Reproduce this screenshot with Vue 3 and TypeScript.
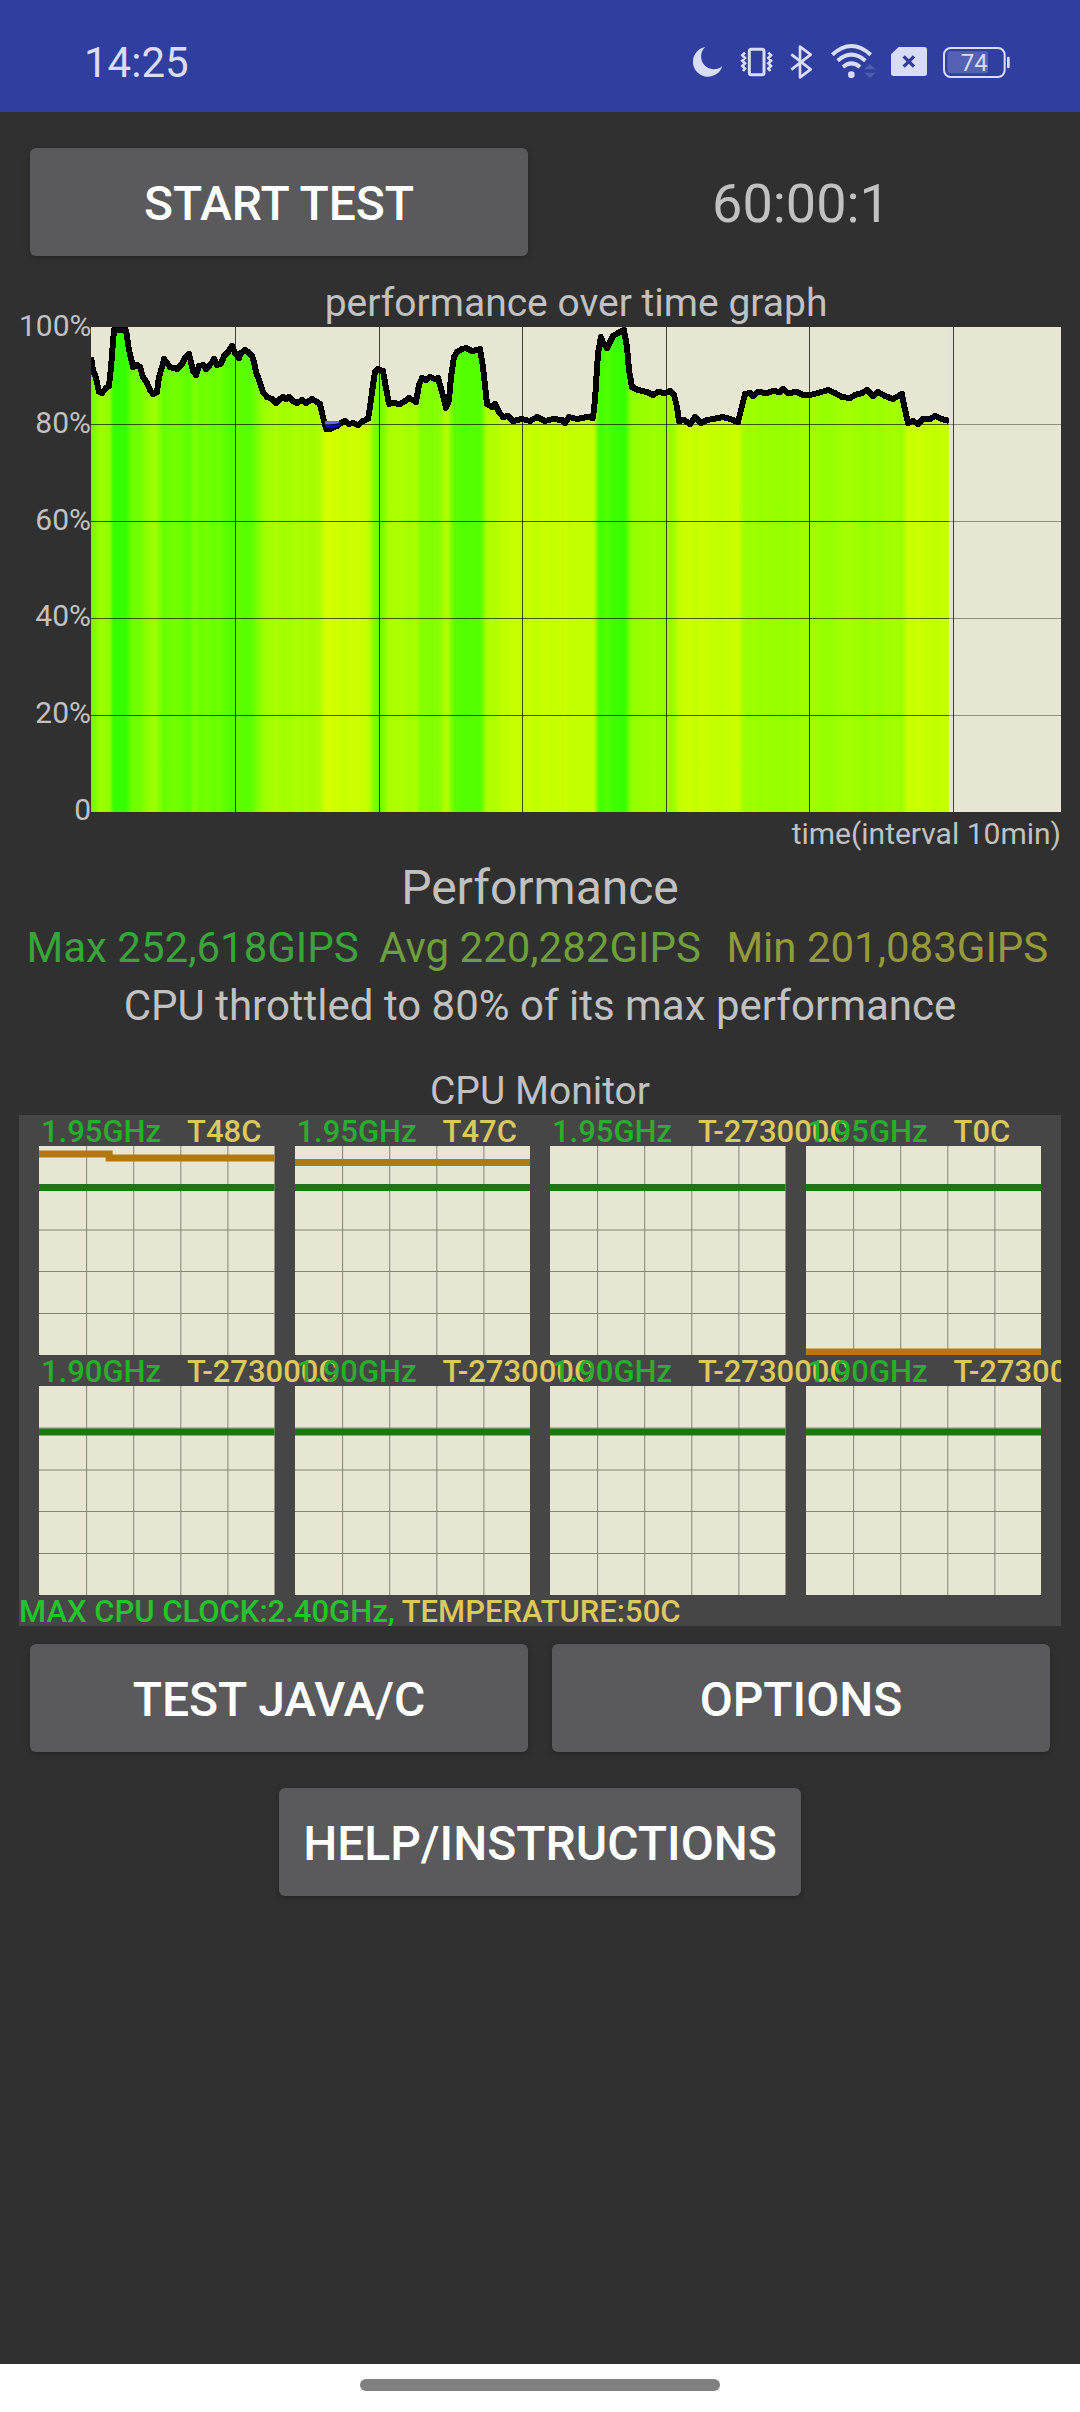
<script setup lang="ts">
import { computed, ref } from 'vue'

type Point = [number, number]

interface Core {
  clock: string
  temp: string
  clockPath: string
  tempPath?: string
}

const PLOT_W = 970
const PLOT_H = 485

// Recorded samples: x in thirds of a pixel along the time axis, y in thirds below the 100% line.
const samples: Point[] = [
  [0, 91], [5, 129], [15, 154], [23, 194], [32, 199], [45, 184], [55, 177], [60, 119], [68, 9],
  [105, 9], [115, 69], [125, 121], [137, 114], [147, 121], [157, 149], [167, 169], [177, 189],
  [187, 201], [197, 195], [205, 149], [214, 119], [219, 97], [227, 109], [237, 120], [257, 126],
  [272, 111], [282, 94], [293, 81], [301, 104], [305, 131], [315, 143], [325, 117], [335, 114],
  [345, 127], [355, 116], [365, 101], [369, 96], [377, 114], [389, 112], [399, 87], [410, 74],
  [423, 57], [433, 77], [443, 92], [451, 77], [461, 68], [472, 75], [483, 87], [490, 104],
  [495, 134], [505, 159], [517, 194], [527, 209], [542, 217], [555, 227], [567, 217], [577, 210],
  [585, 217], [595, 211], [607, 221], [619, 227], [633, 219], [645, 227], [662, 217], [677, 224],
  [687, 231], [694, 259], [702, 294], [705, 306], [717, 306], [737, 297], [749, 289], [762, 282],
  [773, 291], [785, 287], [802, 293], [815, 281], [830, 276], [837, 239], [845, 174], [852, 134],
  [862, 127], [875, 131], [885, 182], [895, 232], [907, 227], [927, 231], [942, 222], [955, 214],
  [975, 224], [985, 174], [992, 154], [1004, 159], [1017, 149], [1032, 157], [1042, 154],
  [1052, 194], [1064, 244], [1073, 219], [1081, 149], [1089, 91], [1097, 74], [1112, 67],
  [1125, 62], [1142, 71], [1157, 69], [1167, 66], [1175, 119], [1187, 231], [1202, 241],
  [1212, 232], [1225, 254], [1235, 271], [1252, 267], [1267, 281], [1294, 275], [1317, 281],
  [1337, 269], [1362, 281], [1387, 275], [1412, 279], [1423, 289], [1434, 269], [1457, 275],
  [1487, 271], [1507, 273], [1512, 219], [1522, 79], [1529, 29], [1537, 47], [1549, 64],
  [1557, 44], [1567, 27], [1582, 17], [1599, 9], [1607, 59], [1615, 129], [1624, 181],
  [1642, 189], [1667, 194], [1687, 203], [1702, 194], [1722, 199], [1737, 191], [1749, 204],
  [1757, 239], [1765, 281], [1779, 279], [1797, 291], [1812, 271], [1829, 287], [1847, 279],
  [1867, 275], [1895, 269], [1917, 277], [1942, 284], [1949, 249], [1962, 201], [1977, 199],
  [1985, 207], [2002, 194], [2027, 197], [2047, 191], [2067, 194], [2077, 187], [2092, 199],
  [2117, 195], [2137, 203], [2157, 204], [2182, 197], [2212, 188], [2232, 197], [2252, 211],
  [2277, 214], [2292, 203], [2312, 199], [2327, 190], [2347, 207], [2362, 195], [2382, 207],
  [2407, 217], [2432, 202], [2440, 234], [2452, 289], [2467, 283], [2482, 291], [2497, 275],
  [2517, 275], [2532, 267], [2552, 275], [2574, 282],
]

const END_X = 858
const curve = computed(() => samples.map(([x, y]) => `${Math.round(x / 3)},${Math.round(y / 3)}`).join(' '))
const area = computed(() => `0,${PLOT_H} ${curve.value} ${END_X},${PLOT_H}`)

// Load colour runs from green at full speed to yellow at 80%.
const stops = computed(() =>
  samples.map(([x, y]) => ({
    offset: x / 3 / END_X,
    color: `rgb(${Math.min(255, Math.round(48 + y * 0.54))}, 255, 0)`,
  })),
)

const yLabels = ['100%', '80%', '60%', '40%', '20%', '0']
const gridX = [144, 288, 431, 575, 718, 862]
const gridY = [97, 194, 291, 388]

const HIGH = 'M0 41.5H235'
const LOW = 'M0 46H235'
const cores: Core[] = [
  { clock: '1.95GHz', temp: 'T48C', clockPath: HIGH, tempPath: 'M0 8H70V12H235' },
  { clock: '1.95GHz', temp: 'T47C', clockPath: HIGH, tempPath: 'M0 16.5H235' },
  { clock: '1.95GHz', temp: 'T-273000C', clockPath: HIGH },
  { clock: '1.95GHz', temp: 'T0C', clockPath: HIGH, tempPath: 'M0 206H235' },
  { clock: '1.90GHz', temp: 'T-273000C', clockPath: LOW },
  { clock: '1.90GHz', temp: 'T-273000C', clockPath: LOW },
  { clock: '1.90GHz', temp: 'T-273000C', clockPath: LOW },
  { clock: '1.90GHz', temp: 'T-273000C', clockPath: LOW },
]

const timer = ref('60:00:1')
</script>

<template>
  <div class="screen">
    <header class="status">
      <time class="clock">14:25</time>
      <div class="icons">
        <svg class="moon" viewBox="96 66 99 120" aria-label="Do not disturb">
          <path d="M139 81A45 45 0 1 0 190 138A37 37 0 0 1 139 81Z" fill="currentColor" />
        </svg>
        <svg class="vibrate" viewBox="240 66 105 120" aria-label="Vibrate" fill="none" stroke="currentColor">
          <rect x="271" y="88" width="44" height="76" rx="6" stroke-width="9" />
          <path d="M258 98L250 106L258 114L250 122L258 130L250 138L258 146L252 153M328 98L336 106L328 114L336 122L328 130L336 138L328 146L334 153" stroke-width="8" />
        </svg>
        <svg class="bluetooth" viewBox="390 66 75 120" aria-label="Bluetooth" fill="none" stroke="currentColor" stroke-width="8" stroke-linejoin="round">
          <path d="M397 103L455 148L423 172V80L455 104L397 149" />
        </svg>
        <svg class="wifi" viewBox="510 66 141 120" aria-label="Wi-Fi" fill="none" stroke="currentColor" stroke-width="12">
          <path d="M520 104Q577 52 635 104M536 122Q577 86 619 122M552 141Q577 119 603 141" />
          <circle cx="577" cy="164" r="10" fill="currentColor" stroke="none" />
          <path d="M616 148L633 132L650 148ZM616 158L633 174L650 158Z" fill="currentColor" stroke="none" opacity=".18" />
        </svg>
        <svg class="sim" viewBox="690 66 108 120" aria-label="No SIM">
          <path d="M713 81H790Q798 81 798 89V160Q798 168 790 168H698Q690 168 690 160V103Z" fill="currentColor" />
          <path d="M728 109L759 140M759 109L728 140" stroke="#303f9f" stroke-width="10" />
        </svg>
        <svg class="battery" viewBox="846 66 207 120" aria-label="Battery">
          <rect x="862" y="94" width="122" height="66" rx="6" fill="currentColor" opacity=".22" />
          <rect x="852" y="84" width="182" height="87" rx="20" fill="none" stroke="currentColor" stroke-width="6" />
          <path d="M1045 114V141" stroke="currentColor" stroke-width="8" stroke-linecap="round" />
          <text x="943" y="153" text-anchor="middle" font-size="72" fill="currentColor">74</text>
        </svg>
      </div>
    </header>

    <main class="content">
      <div class="row">
        <button type="button" class="btn">START TEST</button>
        <output class="timer">{{ timer }}</output>
      </div>

      <section class="graph">
        <h2 class="title graph-title">performance over time graph</h2>
        <div class="y-axis">
          <span v-for="label in yLabels" :key="label">{{ label }}</span>
        </div>
        <svg class="plot" :viewBox="`0 0 ${PLOT_W} ${PLOT_H}`" role="img" aria-label="Performance over time">
          <defs>
            <linearGradient id="load" gradientUnits="userSpaceOnUse" x1="0" y1="0" :x2="END_X" y2="0">
              <stop v-for="(s, i) in stops" :key="i" :offset="s.offset" :stop-color="s.color" />
            </linearGradient>
          </defs>
          <rect :width="PLOT_W" :height="PLOT_H" fill="#e6e6d3" />
          <polygon :points="area" fill="url(#load)" />
          <polyline :points="curve" fill="none" stroke="#000" stroke-width="6" stroke-linejoin="round" shape-rendering="crispEdges" />
          <path d="M234 94H249V99L243 101H235Z" fill="#0000e0" />
          <path d="M234 94H248V96L239 98H234Z" fill="#6666ee" />
          <rect x="858" width="3" :height="PLOT_H" fill="#e4e1de" />
          <g stroke="#000" stroke-opacity=".72">
            <line v-for="x in gridX" :key="x" :x1="x + 0.5" :x2="x + 0.5" y1="0" :y2="PLOT_H" />
          </g>
          <g stroke="#000" stroke-opacity=".65">
            <line v-for="y in gridY" :key="y" x1="0" :x2="END_X" :y1="y + 0.5" :y2="y + 0.5" />
          </g>
          <g stroke="#000" stroke-opacity=".38">
            <line v-for="y in gridY" :key="y" :x1="END_X" :x2="PLOT_W" :y1="y + 0.5" :y2="y + 0.5" />
          </g>
        </svg>
        <p class="x-label">time(interval 10min)</p>
      </section>

      <section class="performance">
        <h2 class="perf-title">Performance</h2>
        <div class="stats">
          <span class="max">Max 252,618GIPS</span>
          <span class="avg">Avg 220,282GIPS</span>
          <span class="min">Min 201,083GIPS</span>
        </div>
        <p class="summary">CPU throttled to 80% of its max performance</p>
      </section>

      <section class="monitor">
        <h2 class="title">CPU Monitor</h2>
        <div class="panel">
          <div class="cores">
            <div v-for="(core, i) in cores" :key="i" class="core">
              <div class="core-head">
                <span class="core-clock">{{ core.clock }}</span>
                <span class="core-temp">{{ core.temp }}</span>
              </div>
              <svg class="core-plot" viewBox="0 0 235 209" preserveAspectRatio="none">
                <rect width="235" height="209" fill="#e6e6d3" />
                <path d="M47.5 0V209M94.5 0V209M141.5 0V209M188.5 0V209M0 42H235M0 84H235M0 125.5H235M0 167.5H235" stroke="#84847a" fill="none" />
                <path v-if="core.tempPath" :d="core.tempPath" stroke="#b3790f" stroke-width="7" fill="none" />
                <path :d="core.clockPath" stroke="#1b780f" stroke-width="7" fill="none" />
              </svg>
            </div>
          </div>
          <p class="panel-foot">
            <span class="foot-clock">MAX CPU CLOCK:2.40GHz, </span><span class="core-temp">TEMPERATURE:50C</span>
          </p>
        </div>
      </section>

      <div class="row actions">
        <button type="button" class="btn">TEST JAVA/C</button>
        <button type="button" class="btn">OPTIONS</button>
      </div>
      <button type="button" class="btn help">HELP/INSTRUCTIONS</button>
    </main>

    <footer class="nav"><span class="pill"></span></footer>
  </div>
</template>

<style>
body {
  margin: 0;
  background: #303030;
}
</style>

<style scoped>
.screen {
  display: flex;
  flex-direction: column;
  min-height: 100vh;
  background: #303030;
  color: #c1c1c1;
  font-family: Roboto, 'Liberation Sans', sans-serif;
}

h2,
p {
  margin: 0;
  font-weight: 400;
}

.status {
  display: flex;
  align-items: center;
  justify-content: space-between;
  box-sizing: border-box;
  height: 112px;
  padding: 12px 69px 0 84px;
  background: #303f9f;
  color: #d9dcf5;
}

.clock {
  font-size: 42px;
}

.icons {
  display: flex;
  align-items: center;
  gap: 15px;
}

.icons svg {
  height: 40px;
}

.moon { width: 33px; }
.vibrate { width: 35px; }
.bluetooth { width: 25px; }
.wifi { width: 47px; }
.sim { width: 36px; }
.battery { width: 69px; }

.content {
  display: flex;
  flex: 1;
  flex-direction: column;
  padding: 36px 19px;
}

.row {
  display: grid;
  grid-template-columns: 1fr 1fr;
  gap: 24px;
  align-items: center;
  padding: 0 11px;
}

.btn {
  height: 108px;
  padding: 2px 24px 0;
  border: 0;
  border-radius: 6px;
  background: #5a595b;
  box-shadow: 0 2px 6px rgba(0, 0, 0, 0.25);
  color: #fff;
  font: 500 48px Roboto, 'Liberation Sans', sans-serif;
}

.timer {
  padding-top: 2px;
  font-size: 54px;
  text-align: center;
}

.title {
  font-size: 39px;
  line-height: 48px;
  text-align: center;
}

.graph {
  display: grid;
  grid-template-columns: 72px 1fr;
  margin-top: 23px;
}

.graph-title,
.x-label {
  grid-column: 2;
}

.y-axis {
  display: flex;
  flex-direction: column;
  justify-content: space-between;
  margin: -17px 0 -14px;
  font-size: 30px;
  line-height: 32px;
  text-align: right;
}

.plot {
  display: block;
  width: 100%;
}

.x-label {
  margin-top: 4px;
  font-size: 30px;
  line-height: 36px;
  text-align: right;
}

.performance {
  margin-top: 7px;
  font-size: 42px;
  line-height: 58px;
  text-align: center;
}

.perf-title {
  margin-bottom: 2px;
  font-size: 48px;
}

.stats {
  display: grid;
  grid-template-columns: repeat(3, 1fr);
  white-space: nowrap;
}

.max { color: #3ba33b; }
.avg { color: #6f9e3c; }
.min { color: #95993a; }

.monitor {
  margin-top: 32px;
}

.panel {
  overflow: hidden;
  background: #464646;
  font-size: 31px;
  font-weight: 500;
  line-height: 29px;
  white-space: nowrap;
}

.cores {
  display: grid;
  grid-template-columns: repeat(4, minmax(0, 1fr));
  column-gap: 20px;
  padding: 0 20px;
}

.core-head {
  display: flex;
  padding: 2px 0 0 2px;
}

.core-clock {
  flex: 0 0 146px;
  color: #27ae2b;
}

.core-temp {
  color: #dcc85c;
}

.core-plot {
  display: block;
  width: 100%;
  height: 209px;
}

.panel-foot {
  padding-top: 2px;
  font-weight: 500;
}

.foot-clock {
  color: #24c32c;
}

.actions {
  margin-top: 18px;
}

.help {
  align-self: center;
  margin-top: 36px;
}

.nav {
  display: flex;
  justify-content: center;
  align-items: flex-start;
  box-sizing: border-box;
  height: 48px;
  padding-top: 15px;
  background: #fff;
}

.pill {
  width: 33.333%;
  height: 12px;
  border-radius: 6px;
  background: #808080;
}
</style>
